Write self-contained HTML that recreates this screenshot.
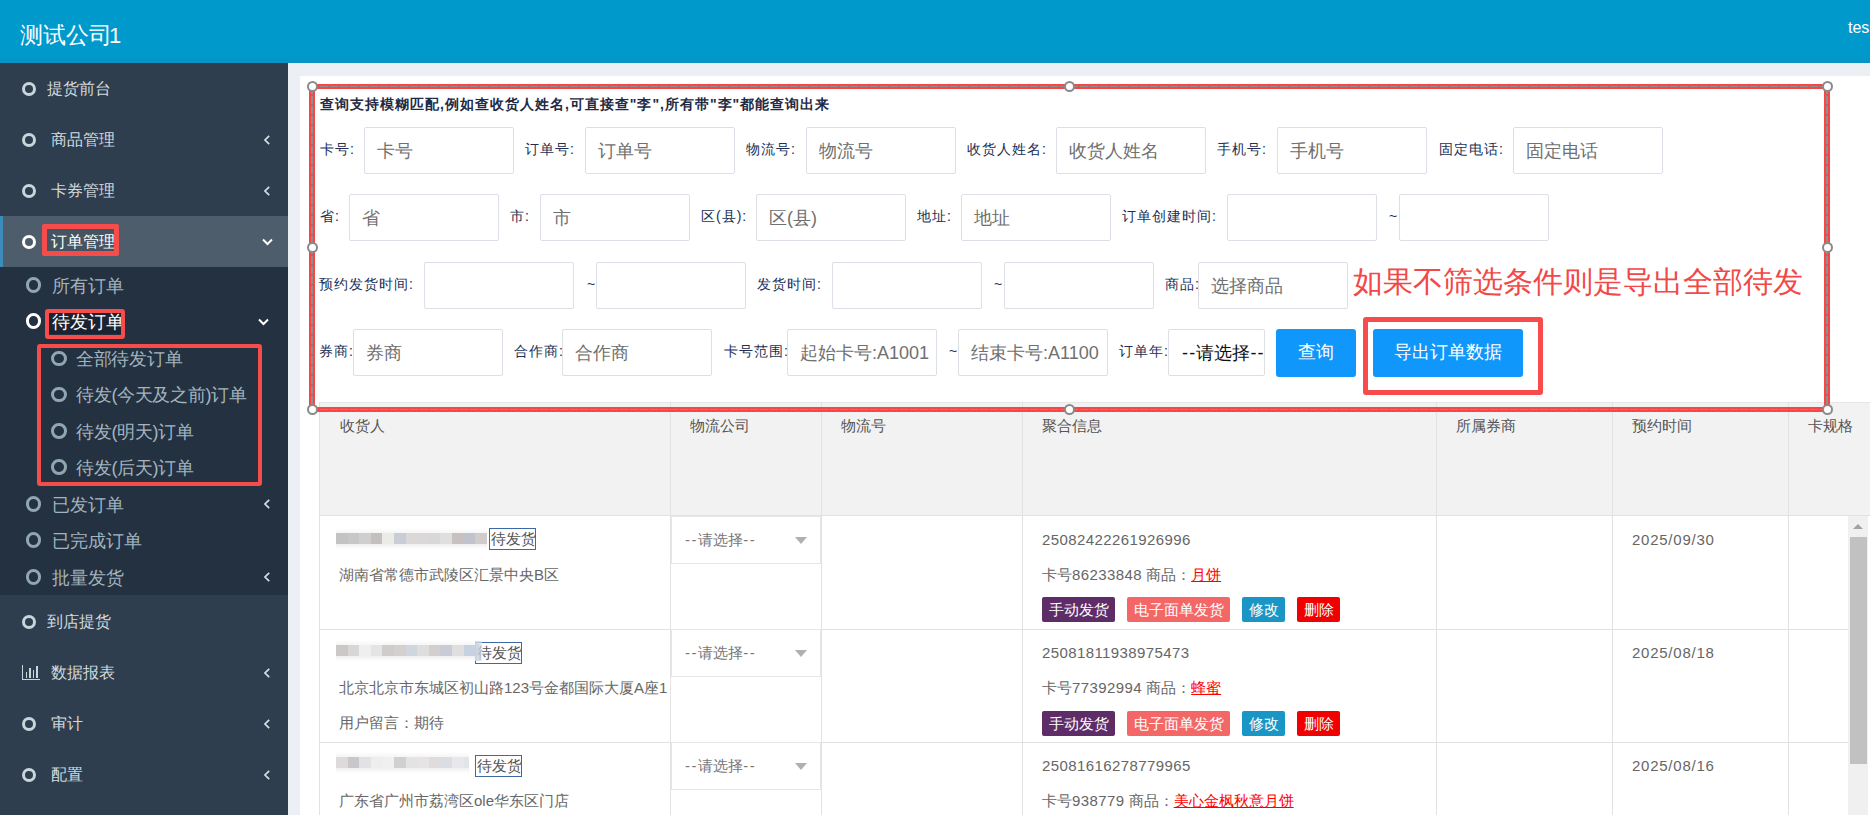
<!DOCTYPE html>
<html><head><meta charset="utf-8"><style>
*{box-sizing:border-box;margin:0;padding:0}
html,body{width:1870px;height:815px;overflow:hidden;background:#ecf0f5;font-family:"Liberation Sans",sans-serif;position:relative}
.a{position:absolute;white-space:nowrap}
#hdr{left:0;top:0;width:1870px;height:63px;background:#0099cc}
#side{left:0;top:63px;width:288px;height:752px;background:#2e3e4e}
.ic{position:absolute;border-radius:50%}
.ar{position:absolute;width:7px;height:7px;border-left:1.6px solid #b8c7ce;border-bottom:1.6px solid #b8c7ce}
.lb{position:absolute;font-size:14px;letter-spacing:1px;line-height:20px;color:#222f55;white-space:nowrap}
.in{position:absolute;height:47px;border:1px solid #dcdfe6;border-radius:2px;background:#fff;font-size:18px;color:#6e6e6e;line-height:46.5px;white-space:nowrap;overflow:hidden}
.btn{position:absolute;background:#1097fb;color:#fff;font-size:18px;text-align:center;border-radius:3px}
.th{position:absolute;font-size:15px;color:#555;line-height:20px;white-space:nowrap}
.td{position:absolute;font-size:15px;color:#666;line-height:20px;white-space:nowrap}
.tag{position:absolute;height:25px;color:#fff;font-size:15px;line-height:25px;text-align:center;border-radius:2px;white-space:nowrap}
.vl{position:absolute;width:1px;background:#e2e2e2}
.hl{position:absolute;height:1px;background:#e2e2e2}
</style></head><body>
<div id="hdr" class="a"></div>
<div class="a" style="left:0;top:58px;width:1870px;height:5px;background:#0596c6"></div>
<div class="a" style="left:20px;top:22.5px;font-size:22.5px;line-height:26px;color:#fff">测试公司<span style="margin-left:-3px;font-size:22px">1</span></div>
<div class="a" style="left:1848px;top:18px;font-size:16px;line-height:20px;color:#fff">tes</div>
<div id="side" class="a"></div>
<div class="a" style="left:0;top:267px;width:288px;height:328px;background:#243141"></div>
<div class="a" style="left:0;top:216px;width:288px;height:51px;background:#4d5d6b"></div>
<div class="a" style="left:0;top:216px;width:3px;height:51px;background:#3c8dbc"></div>
<div class="a" style="left:47px;top:229px;width:67px;height:22px;background:#455461"></div>
<div class="ic" style="left:21.8px;top:81.8px;width:14.5px;height:14.5px;border:3px solid #c9d5da"></div>
<div class="a" style="left:47px;top:78px;font-size:16px;line-height:22px;color:#d3dade">提货前台</div>
<div class="ic" style="left:21.8px;top:132.8px;width:14.5px;height:14.5px;border:3px solid #c9d5da"></div>
<div class="a" style="left:51px;top:129px;font-size:16px;line-height:22px;color:#d3dade">商品管理</div>
<svg class="a" style="left:263.5px;top:135.0px" width="7" height="10" viewBox="0 0 7 10"><polyline points="5.2,0.8 1,5 5.2,9.2" fill="none" stroke="#d5dee3" stroke-width="1.7"/></svg>
<div class="ic" style="left:21.8px;top:183.8px;width:14.5px;height:14.5px;border:3px solid #c9d5da"></div>
<div class="a" style="left:51px;top:180px;font-size:16px;line-height:22px;color:#d3dade">卡券管理</div>
<svg class="a" style="left:263.5px;top:186.0px" width="7" height="10" viewBox="0 0 7 10"><polyline points="5.2,0.8 1,5 5.2,9.2" fill="none" stroke="#d5dee3" stroke-width="1.7"/></svg>
<div class="ic" style="left:21.8px;top:234.8px;width:14.5px;height:14.5px;border:3px solid #fff"></div>
<div class="a" style="left:51px;top:231px;font-size:16px;line-height:22px;color:#fff">订单管理</div>
<svg class="a" style="left:261.5px;top:237.5px" width="11" height="8" viewBox="0 0 11 8"><polyline points="1,1.5 5.5,6 10,1.5" fill="none" stroke="#fff" stroke-width="2"/></svg>
<div class="ic" style="left:21.8px;top:614.8px;width:14.5px;height:14.5px;border:3px solid #c9d5da"></div>
<div class="a" style="left:47px;top:611px;font-size:16px;line-height:22px;color:#d3dade">到店提货</div>
<div class="a" style="left:22px;top:665px;width:18px;height:15px;border-left:1.6px solid #c9d5da;border-bottom:1.6px solid #c9d5da"></div>
<div class="a" style="left:25.5px;top:672.4px;width:1.6px;height:6px;background:#c9d5da"></div>
<div class="a" style="left:29px;top:668.4px;width:1.6px;height:10px;background:#c9d5da"></div>
<div class="a" style="left:32.5px;top:670.4px;width:1.6px;height:8px;background:#c9d5da"></div>
<div class="a" style="left:36px;top:666.4px;width:1.6px;height:12px;background:#c9d5da"></div>
<div class="a" style="left:51px;top:662px;font-size:16px;line-height:22px;color:#d3dade">数据报表</div>
<svg class="a" style="left:263.5px;top:668.0px" width="7" height="10" viewBox="0 0 7 10"><polyline points="5.2,0.8 1,5 5.2,9.2" fill="none" stroke="#d5dee3" stroke-width="1.7"/></svg>
<div class="ic" style="left:21.8px;top:716.8px;width:14.5px;height:14.5px;border:3px solid #c9d5da"></div>
<div class="a" style="left:51px;top:713px;font-size:16px;line-height:22px;color:#d3dade">审计</div>
<svg class="a" style="left:263.5px;top:719.0px" width="7" height="10" viewBox="0 0 7 10"><polyline points="5.2,0.8 1,5 5.2,9.2" fill="none" stroke="#d5dee3" stroke-width="1.7"/></svg>
<div class="ic" style="left:21.8px;top:767.8px;width:14.5px;height:14.5px;border:3px solid #c9d5da"></div>
<div class="a" style="left:51px;top:764px;font-size:16px;line-height:22px;color:#d3dade">配置</div>
<svg class="a" style="left:263.5px;top:770.0px" width="7" height="10" viewBox="0 0 7 10"><polyline points="5.2,0.8 1,5 5.2,9.2" fill="none" stroke="#d5dee3" stroke-width="1.7"/></svg>
<div class="ic" style="left:25.8px;top:277.2px;width:15.5px;height:15.5px;border:3px solid #90a6b0"></div>
<div class="a" style="left:52px;top:273.5px;font-size:18px;line-height:24px;letter-spacing:0;color:#a2b5bf">所有订单</div>
<div class="ic" style="left:25.8px;top:313.2px;width:15.5px;height:15.5px;border:3px solid #fff"></div>
<div class="a" style="left:47px;top:309px;width:74px;height:25px;background:#1b2330"></div>
<div class="a" style="left:52px;top:309.5px;font-size:18px;line-height:24px;letter-spacing:0;color:#fff">待发订单</div>
<svg class="a" style="left:258.0px;top:317.5px" width="11" height="8" viewBox="0 0 11 8"><polyline points="1,1.5 5.5,6 10,1.5" fill="none" stroke="#fff" stroke-width="2"/></svg>
<div class="ic" style="left:51.2px;top:350.8px;width:15.5px;height:15.5px;border:3px solid #90a6b0"></div>
<div class="a" style="left:76px;top:347.0px;font-size:18px;line-height:24px;letter-spacing:-0.3px;color:#a2b5bf">全部待发订单</div>
<div class="ic" style="left:51.2px;top:386.8px;width:15.5px;height:15.5px;border:3px solid #90a6b0"></div>
<div class="a" style="left:76px;top:383.0px;font-size:18px;line-height:24px;letter-spacing:-0.3px;color:#a2b5bf">待发(今天及之前)订单</div>
<div class="ic" style="left:51.2px;top:423.2px;width:15.5px;height:15.5px;border:3px solid #90a6b0"></div>
<div class="a" style="left:76px;top:419.5px;font-size:18px;line-height:24px;letter-spacing:-0.3px;color:#a2b5bf">待发(明天)订单</div>
<div class="ic" style="left:51.2px;top:459.2px;width:15.5px;height:15.5px;border:3px solid #90a6b0"></div>
<div class="a" style="left:76px;top:455.5px;font-size:18px;line-height:24px;letter-spacing:-0.3px;color:#a2b5bf">待发(后天)订单</div>
<div class="ic" style="left:25.8px;top:496.2px;width:15.5px;height:15.5px;border:3px solid #90a6b0"></div>
<div class="a" style="left:52px;top:492.5px;font-size:18px;line-height:24px;letter-spacing:0;color:#a2b5bf">已发订单</div>
<svg class="a" style="left:263.5px;top:499.0px" width="7" height="10" viewBox="0 0 7 10"><polyline points="5.2,0.8 1,5 5.2,9.2" fill="none" stroke="#d5dee3" stroke-width="1.7"/></svg>
<div class="ic" style="left:25.8px;top:532.2px;width:15.5px;height:15.5px;border:3px solid #90a6b0"></div>
<div class="a" style="left:52px;top:528.5px;font-size:18px;line-height:24px;letter-spacing:0;color:#a2b5bf">已完成订单</div>
<div class="ic" style="left:25.8px;top:569.2px;width:15.5px;height:15.5px;border:3px solid #90a6b0"></div>
<div class="a" style="left:52px;top:565.5px;font-size:18px;line-height:24px;letter-spacing:0;color:#a2b5bf">批量发货</div>
<svg class="a" style="left:263.5px;top:572.0px" width="7" height="10" viewBox="0 0 7 10"><polyline points="5.2,0.8 1,5 5.2,9.2" fill="none" stroke="#d5dee3" stroke-width="1.7"/></svg>
<div class="a" style="left:42px;top:224px;width:77px;height:32px;border:5px solid #f64c4c;border-radius:2px"></div>
<div class="a" style="left:45px;top:309px;width:80px;height:30px;border:4.5px solid #f64c4c;border-radius:3px"></div>
<div class="a" style="left:37px;top:344px;width:225px;height:142px;border:4.5px solid #f64c4c;border-radius:3px"></div>
<div class="a" style="left:300px;top:76px;width:1570px;height:739px;background:#fff"></div>
<div class="a" style="left:320px;top:94px;font-size:14px;letter-spacing:1px;line-height:20px;font-weight:bold;color:#1f2a44">查询支持模糊匹配,例如查收货人姓名,可直接查"李",所有带"李"都能查询出来</div>
<div class="lb" style="left:320px;top:139.0px">卡号:</div>
<div class="in" style="left:364px;top:127px;width:150px;padding-left:12px;color:#707070">卡号</div>
<div class="lb" style="left:525px;top:139.0px">订单号:</div>
<div class="in" style="left:585px;top:127px;width:150px;padding-left:12px;color:#707070">订单号</div>
<div class="lb" style="left:746px;top:139.0px">物流号:</div>
<div class="in" style="left:806px;top:127px;width:150px;padding-left:12px;color:#707070">物流号</div>
<div class="lb" style="left:967px;top:139.0px">收货人姓名:</div>
<div class="in" style="left:1056px;top:127px;width:150px;padding-left:12px;color:#707070">收货人姓名</div>
<div class="lb" style="left:1217px;top:139.0px">手机号:</div>
<div class="in" style="left:1277px;top:127px;width:150px;padding-left:12px;color:#707070">手机号</div>
<div class="lb" style="left:1439px;top:139.0px">固定电话:</div>
<div class="in" style="left:1513px;top:127px;width:150px;padding-left:12px;color:#707070">固定电话</div>
<div class="lb" style="left:320px;top:206.0px">省:</div>
<div class="in" style="left:349px;top:194px;width:150px;padding-left:12px;color:#707070">省</div>
<div class="lb" style="left:510px;top:206.0px">市:</div>
<div class="in" style="left:540px;top:194px;width:150px;padding-left:12px;color:#707070">市</div>
<div class="lb" style="left:701px;top:206.0px">区(县):</div>
<div class="in" style="left:756px;top:194px;width:150px;padding-left:12px;color:#707070">区(县)</div>
<div class="lb" style="left:917px;top:206.0px">地址:</div>
<div class="in" style="left:961px;top:194px;width:150px;padding-left:12px;color:#707070">地址</div>
<div class="lb" style="left:1122px;top:206.0px">订单创建时间:</div>
<div class="in" style="left:1227px;top:194px;width:150px;padding-left:12px;color:#707070"></div>
<div class="lb" style="left:1389px;top:206.0px">~</div>
<div class="in" style="left:1399px;top:194px;width:150px;padding-left:12px;color:#707070"></div>
<div class="lb" style="left:319px;top:274.0px">预约发货时间:</div>
<div class="in" style="left:424px;top:262px;width:150px;padding-left:12px;color:#707070"></div>
<div class="lb" style="left:587px;top:274.0px">~</div>
<div class="in" style="left:596px;top:262px;width:150px;padding-left:12px;color:#707070"></div>
<div class="lb" style="left:757px;top:274.0px">发货时间:</div>
<div class="in" style="left:832px;top:262px;width:150px;padding-left:12px;color:#707070"></div>
<div class="lb" style="left:994px;top:274.0px">~</div>
<div class="in" style="left:1004px;top:262px;width:150px;padding-left:12px;color:#707070"></div>
<div class="lb" style="left:1165px;top:274.0px">商品:</div>
<div class="in" style="left:1198px;top:262px;width:150px;padding-left:12px;color:#707070">选择商品</div>
<div class="lb" style="left:319px;top:341.0px">券商:</div>
<div class="in" style="left:353px;top:329px;width:150px;padding-left:12px;color:#707070">券商</div>
<div class="lb" style="left:514px;top:341.0px">合作商:</div>
<div class="in" style="left:562px;top:329px;width:150px;padding-left:12px;color:#707070">合作商</div>
<div class="lb" style="left:724px;top:341.0px">卡号范围:</div>
<div class="in" style="left:787px;top:329px;width:150px;padding-left:12px;color:#707070">起始卡号:A1001</div>
<div class="lb" style="left:949px;top:341.0px">~</div>
<div class="in" style="left:958px;top:329px;width:150px;padding-left:12px;color:#707070">结束卡号:A1100</div>
<div class="lb" style="left:1119px;top:341.0px">订单年:</div>
<div class="in" style="left:1168px;top:329px;width:97px;padding-left:13px;color:#111"><span style="letter-spacing:1.2px">--</span>请选择<span style="letter-spacing:1.2px">--</span></div>
<div class="btn" style="left:1276px;top:329px;width:80px;height:47.5px;line-height:47px">查询</div>
<div class="btn" style="left:1373px;top:329px;width:150px;height:47.5px;line-height:47px">导出订单数据</div>
<div class="a" style="left:1353px;top:264px;font-size:30px;line-height:36px;color:#f24848">如果不筛选条件则是导出全部待发</div>
<div class="a" style="left:1363px;top:316.5px;width:180px;height:78px;border:5px solid #f84c4c;border-radius:3px"></div>
<div class="a" style="left:319px;top:402px;width:1551px;height:114px;background:#f2f2f2;border-left:1px solid #e2e2e2;border-top:1px solid #e6e6e6"></div>
<div class="hl" style="left:319px;top:515px;width:1551px"></div>
<div class="vl" style="left:670px;top:402px;height:113px"></div>
<div class="vl" style="left:821px;top:402px;height:113px"></div>
<div class="vl" style="left:1022px;top:402px;height:113px"></div>
<div class="vl" style="left:1436px;top:402px;height:113px"></div>
<div class="vl" style="left:1612px;top:402px;height:113px"></div>
<div class="vl" style="left:1788px;top:402px;height:113px"></div>
<div class="th" style="left:340px;top:416px">收货人</div>
<div class="th" style="left:690px;top:416px">物流公司</div>
<div class="th" style="left:841px;top:416px">物流号</div>
<div class="th" style="left:1042px;top:416px">聚合信息</div>
<div class="th" style="left:1456px;top:416px">所属券商</div>
<div class="th" style="left:1632px;top:416px">预约时间</div>
<div class="th" style="left:1808px;top:416px">卡规格</div>
<div class="vl" style="left:319px;top:516px;height:299px"></div>
<div class="vl" style="left:670px;top:516px;height:299px"></div>
<div class="vl" style="left:821px;top:516px;height:299px"></div>
<div class="vl" style="left:1022px;top:516px;height:299px"></div>
<div class="vl" style="left:1436px;top:516px;height:299px"></div>
<div class="vl" style="left:1612px;top:516px;height:299px"></div>
<div class="vl" style="left:1788px;top:516px;height:299px"></div>
<div class="hl" style="left:319px;top:629px;width:1530px"></div>
<div class="hl" style="left:319px;top:742px;width:1530px"></div>
<div class="a" style="left:336px;top:533.0px;width:151px;height:11px;background:linear-gradient(90deg,#c3c3c3 0.0px 11.6px,#c8c6c6 11.6px 23.2px,#d0cfcf 23.2px 34.8px,#c5c0c0 34.8px 46.4px,#ebebe8 46.4px 58.0px,#c9cdd6 58.0px 69.6px,#dcd8d8 69.6px 81.2px,#dad8d8 81.2px 92.8px,#d8d8d8 92.8px 104.4px,#e0dede 104.4px 116.0px,#c9c1c1 116.0px 127.6px,#c1c3cc 127.6px 139.2px,#d0cccc 139.2px 150.8px,#d8e0ea 150.8px 151.0px)"></div>
<div class="a" style="left:336px;top:544.0px;width:151px;height:5px;background:linear-gradient(180deg,rgba(225,225,228,.55),rgba(255,255,255,0))"></div>
<div class="a" style="left:336px;top:528.0px;width:151px;height:5px;background:linear-gradient(0deg,rgba(230,230,232,.4),rgba(255,255,255,0))"></div>
<div class="a" style="left:489px;top:528.0px;width:47px;height:22px;border:1.5px solid #3d6aa5;font-size:15px;line-height:19px;color:#555;padding-left:1px;overflow:hidden">待发货</div>
<div class="td" style="left:339px;top:564.5px">湖南省常德市武陵区汇景中央B区</div>
<div class="a" style="left:671px;top:515.5px;width:150px;height:48px;border:1px solid #e6e6e6;background:#fff"></div>
<div class="td" style="left:685px;top:529.5px;color:#777"><span style="letter-spacing:1.6px">--</span>请选择<span style="letter-spacing:1.6px">--</span></div>
<div class="a" style="left:795px;top:536.5px;width:0;height:0;border-left:6.5px solid transparent;border-right:6.5px solid transparent;border-top:7px solid #b0b0b0"></div>
<div class="td" style="left:1042px;top:529.5px;letter-spacing:0.4px">25082422261926996</div>
<div class="td" style="left:1042px;top:564.5px">卡号<span style="letter-spacing:0.4px">86233848</span> 商品<span style="letter-spacing:-3px">：</span><span style="margin-left:3px;color:#f00;text-decoration:underline">月饼</span></div>
<div class="td" style="left:1632px;top:529.5px;letter-spacing:0.75px">2025/09/30</div>
<div class="tag" style="left:1042px;top:597.0px;width:73px;background:#5e2d67">手动发货</div>
<div class="tag" style="left:1127px;top:597.0px;width:103px;background:#f46767">电子面单发货</div>
<div class="tag" style="left:1242px;top:597.0px;width:43px;background:#1996c6">修改</div>
<div class="tag" style="left:1297px;top:597.0px;width:43px;background:#f00000">删除</div>
<div class="a" style="left:336px;top:644.5px;width:145px;height:11px;background:linear-gradient(90deg,#ccc8c8 0.0px 11.6px,#d8d6d6 11.6px 23.2px,#efefef 23.2px 34.8px,#e4e4e4 34.8px 46.4px,#cfcccc 46.4px 58.0px,#d4d0d0 58.0px 69.6px,#d0d6e0 69.6px 81.2px,#dedede 81.2px 92.8px,#d4cfcf 92.8px 104.4px,#c9ccd6 104.4px 116.0px,#e0dede 116.0px 127.6px,#c6d2e2 127.6px 139.2px,#c9d3df 139.2px 145.0px)"></div>
<div class="a" style="left:336px;top:655.5px;width:145px;height:5px;background:linear-gradient(180deg,rgba(225,225,228,.55),rgba(255,255,255,0))"></div>
<div class="a" style="left:336px;top:639.5px;width:145px;height:5px;background:linear-gradient(0deg,rgba(230,230,232,.4),rgba(255,255,255,0))"></div>
<div class="a" style="left:475px;top:641.5px;width:47px;height:22px;border:1.5px solid #3d6aa5;font-size:15px;line-height:19px;color:#555;padding-left:1px;overflow:hidden">待发货</div>
<div class="a" style="left:475px;top:640.5px;width:7px;height:20px;background:linear-gradient(90deg,#c9d3df,rgba(220,228,238,.6))"></div>
<div class="td" style="left:339px;top:678px">北京北京市东城区初山路123号金都国际大厦A座1</div>
<div class="td" style="left:339px;top:713px">用户留言：期待</div>
<div class="a" style="left:671px;top:629px;width:150px;height:48px;border:1px solid #e6e6e6;background:#fff"></div>
<div class="td" style="left:685px;top:643px;color:#777"><span style="letter-spacing:1.6px">--</span>请选择<span style="letter-spacing:1.6px">--</span></div>
<div class="a" style="left:795px;top:650px;width:0;height:0;border-left:6.5px solid transparent;border-right:6.5px solid transparent;border-top:7px solid #b0b0b0"></div>
<div class="td" style="left:1042px;top:643px;letter-spacing:0.4px">25081811938975473</div>
<div class="td" style="left:1042px;top:678px">卡号<span style="letter-spacing:0.4px">77392994</span> 商品<span style="letter-spacing:-3px">：</span><span style="margin-left:3px;color:#f00;text-decoration:underline">蜂蜜</span></div>
<div class="td" style="left:1632px;top:643px;letter-spacing:0.75px">2025/08/18</div>
<div class="tag" style="left:1042px;top:710.5px;width:73px;background:#5e2d67">手动发货</div>
<div class="tag" style="left:1127px;top:710.5px;width:103px;background:#f46767">电子面单发货</div>
<div class="tag" style="left:1242px;top:710.5px;width:43px;background:#1996c6">修改</div>
<div class="tag" style="left:1297px;top:710.5px;width:43px;background:#f00000">删除</div>
<div class="a" style="left:336px;top:757px;width:133px;height:11px;background:linear-gradient(90deg,#dedada 0.0px 11.6px,#c8c8ca 11.6px 23.2px,#e0e2e6 23.2px 34.8px,#eeeeee 34.8px 46.4px,#f0f0f0 46.4px 58.0px,#d0d0d0 58.0px 69.6px,#e4e2e2 69.6px 81.2px,#e6e4e4 81.2px 92.8px,#e0dcdc 92.8px 104.4px,#dcdce4 104.4px 116.0px,#e8e8ec 116.0px 127.6px,#e4e4e8 127.6px 133.0px)"></div>
<div class="a" style="left:336px;top:768px;width:133px;height:5px;background:linear-gradient(180deg,rgba(225,225,228,.55),rgba(255,255,255,0))"></div>
<div class="a" style="left:336px;top:752px;width:133px;height:5px;background:linear-gradient(0deg,rgba(230,230,232,.4),rgba(255,255,255,0))"></div>
<div class="a" style="left:475px;top:754.5px;width:47px;height:22px;border:1.5px solid #3d6aa5;font-size:15px;line-height:19px;color:#555;padding-left:1px;overflow:hidden">待发货</div>
<div class="td" style="left:339px;top:791px">广东省广州市荔湾区ole华东区门店</div>
<div class="a" style="left:671px;top:742px;width:150px;height:48px;border:1px solid #e6e6e6;background:#fff"></div>
<div class="td" style="left:685px;top:756px;color:#777"><span style="letter-spacing:1.6px">--</span>请选择<span style="letter-spacing:1.6px">--</span></div>
<div class="a" style="left:795px;top:763px;width:0;height:0;border-left:6.5px solid transparent;border-right:6.5px solid transparent;border-top:7px solid #b0b0b0"></div>
<div class="td" style="left:1042px;top:756px;letter-spacing:0.4px">25081616278779965</div>
<div class="td" style="left:1042px;top:791px">卡号<span style="letter-spacing:0.4px">938779</span> 商品<span style="letter-spacing:-3px">：</span><span style="margin-left:3px;color:#f00;text-decoration:underline">美心金枫秋意月饼</span></div>
<div class="td" style="left:1632px;top:756px;letter-spacing:0.75px">2025/08/16</div>
<div class="a" style="left:1848px;top:516px;width:20px;height:299px;background:#f0f0f0"></div>
<div class="a" style="left:1853px;top:524px;width:0;height:0;border-left:5px solid transparent;border-right:5px solid transparent;border-bottom:5px solid #a3a3a3"></div>
<div class="a" style="left:1850px;top:537px;width:17px;height:227px;background:#c1c1c1"></div>
<div class="a" style="left:309.5px;top:83.55px;width:1520.0px;height:5.5px;background:#f84646"></div>
<div class="a" style="left:309.5px;top:85.55px;width:1520.0px;height:1.5px;background:repeating-linear-gradient(90deg,#8f8f8f 0 8px,#c06060 8px 10px)"></div>
<div class="a" style="left:309.5px;top:406.75px;width:1520.0px;height:5.5px;background:#f84646"></div>
<div class="a" style="left:309.5px;top:408.75px;width:1520.0px;height:1.5px;background:repeating-linear-gradient(90deg,#8f8f8f 0 8px,#c06060 8px 10px)"></div>
<div class="a" style="left:309.25px;top:86.3px;width:5.5px;height:323.2px;background:#f84646"></div>
<div class="a" style="left:311.25px;top:86.3px;width:1.5px;height:323.2px;background:repeating-linear-gradient(180deg,#8f8f8f 0 8px,#c06060 8px 10px)"></div>
<div class="a" style="left:1824.25px;top:86.3px;width:5.5px;height:323.2px;background:#f84646"></div>
<div class="a" style="left:1826.25px;top:86.3px;width:1.5px;height:323.2px;background:repeating-linear-gradient(180deg,#8f8f8f 0 8px,#c06060 8px 10px)"></div>
<div class="ic" style="left:306.5px;top:80.8px;width:11px;height:11px;background:#fff;border:2px solid #8a8a8a"></div>
<div class="ic" style="left:1064.0px;top:80.8px;width:11px;height:11px;background:#fff;border:2px solid #8a8a8a"></div>
<div class="ic" style="left:1821.5px;top:80.8px;width:11px;height:11px;background:#fff;border:2px solid #8a8a8a"></div>
<div class="ic" style="left:306.5px;top:242.0px;width:11px;height:11px;background:#fff;border:2px solid #8a8a8a"></div>
<div class="ic" style="left:1821.5px;top:242.0px;width:11px;height:11px;background:#fff;border:2px solid #8a8a8a"></div>
<div class="ic" style="left:306.5px;top:404.0px;width:11px;height:11px;background:#fff;border:2px solid #8a8a8a"></div>
<div class="ic" style="left:1064.0px;top:404.0px;width:11px;height:11px;background:#fff;border:2px solid #8a8a8a"></div>
<div class="ic" style="left:1821.5px;top:404.0px;width:11px;height:11px;background:#fff;border:2px solid #8a8a8a"></div>
</body></html>
